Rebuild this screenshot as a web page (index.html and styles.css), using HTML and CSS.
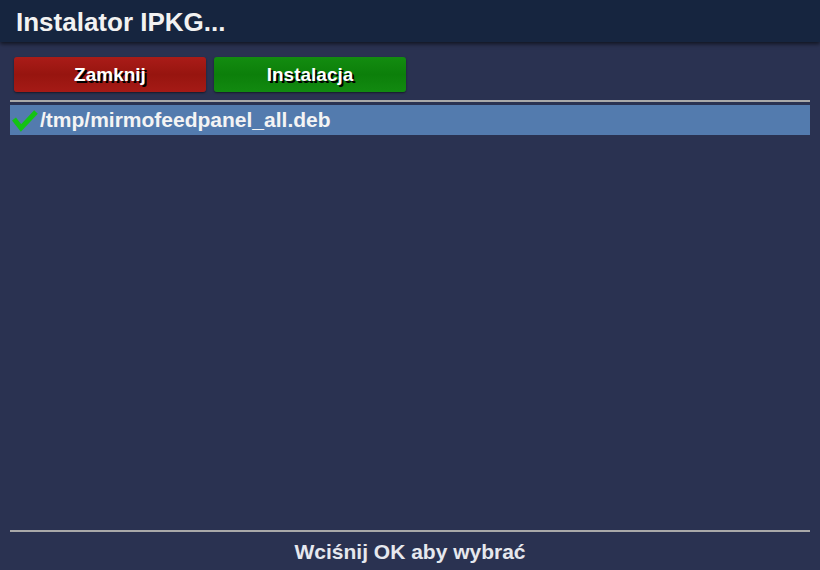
FILE: index.html
```html
<!DOCTYPE html>
<html>
<head>
<meta charset="utf-8">
<link rel="stylesheet" href="styles.css">
</head>
<body>
<div class="screen">
  <header class="titlebar">Instalator IPKG...</header>
  <div class="buttons">
    <div class="btn btn-red">Zamknij</div>
    <div class="btn btn-green">Instalacja</div>
  </div>
  <div class="sep"></div>
  <ul class="list">
    <li class="item selected">
      <svg class="check" width="28" height="24" viewBox="0 0 28 24"><path d="M3 10 L10 19 L25 3" fill="none" stroke="#14c314" stroke-width="5" stroke-linecap="butt" stroke-linejoin="miter"/></svg>
      <span>/tmp/mirmofeedpanel_all.deb</span>
    </li>
  </ul>
  <div class="sep"></div>
  <footer class="hint">Wciśnij OK aby wybrać</footer>
</div>
</body>
</html>
```
FILE: styles.css
```css
html, body { margin: 0; padding: 0; }
body {
  width: 820px; height: 570px; overflow: hidden;
  background: #2a3251;
  font-family: "Liberation Sans", Arial, sans-serif;
  color: #ffffff;
}
.screen { display: flex; flex-direction: column; height: 570px; }
.titlebar {
  height: 42px;
  background: #16253f;
  box-shadow: 0 2px 4px rgba(0,0,0,0.6);
  font-weight: bold;
  font-size: 26px;
  line-height: 44px;
  padding-left: 16px;
  color: #f2f2f2;
  position: relative;
  z-index: 1;
}
.buttons {
  display: flex; gap: 8px;
  padding: 15px 0 0 14px;
  height: 35px;
}
.btn {
  width: 192px; height: 35px;
  border-radius: 3px;
  box-shadow: 0 1px 2px rgba(0,0,0,0.5);
  font-weight: bold; font-size: 19px;
  line-height: 35px;
  text-align: center;
  color: #fff;
  text-shadow: 2px 2px 0 #000;
}
.btn-red { background: linear-gradient(#aa1c18, #97150f 50%, #a51a16); }
.btn-green { background: linear-gradient(#138c10, #0c7f0a 50%, #128a10); }
.sep {
  margin: 0 10px;
  height: 2px;
  background: #a9a9a9;
}
.buttons + .sep { margin-top: 8px; }
.list { list-style: none; margin: 3px 10px 0; padding: 0; flex: 1; }
.item {
  display: flex; align-items: center;
  height: 30px;
  font-weight: bold; font-size: 21px;
  color: #f4f4f4;
}
.item.selected { background: #537bae; }
.check { margin: 2px 1px 0 1px; flex: none; }
.hint {
  height: 38px;
  text-align: center;
  font-weight: bold; font-size: 21px;
  line-height: 40px;
  color: #e6e8ee;
}
```
